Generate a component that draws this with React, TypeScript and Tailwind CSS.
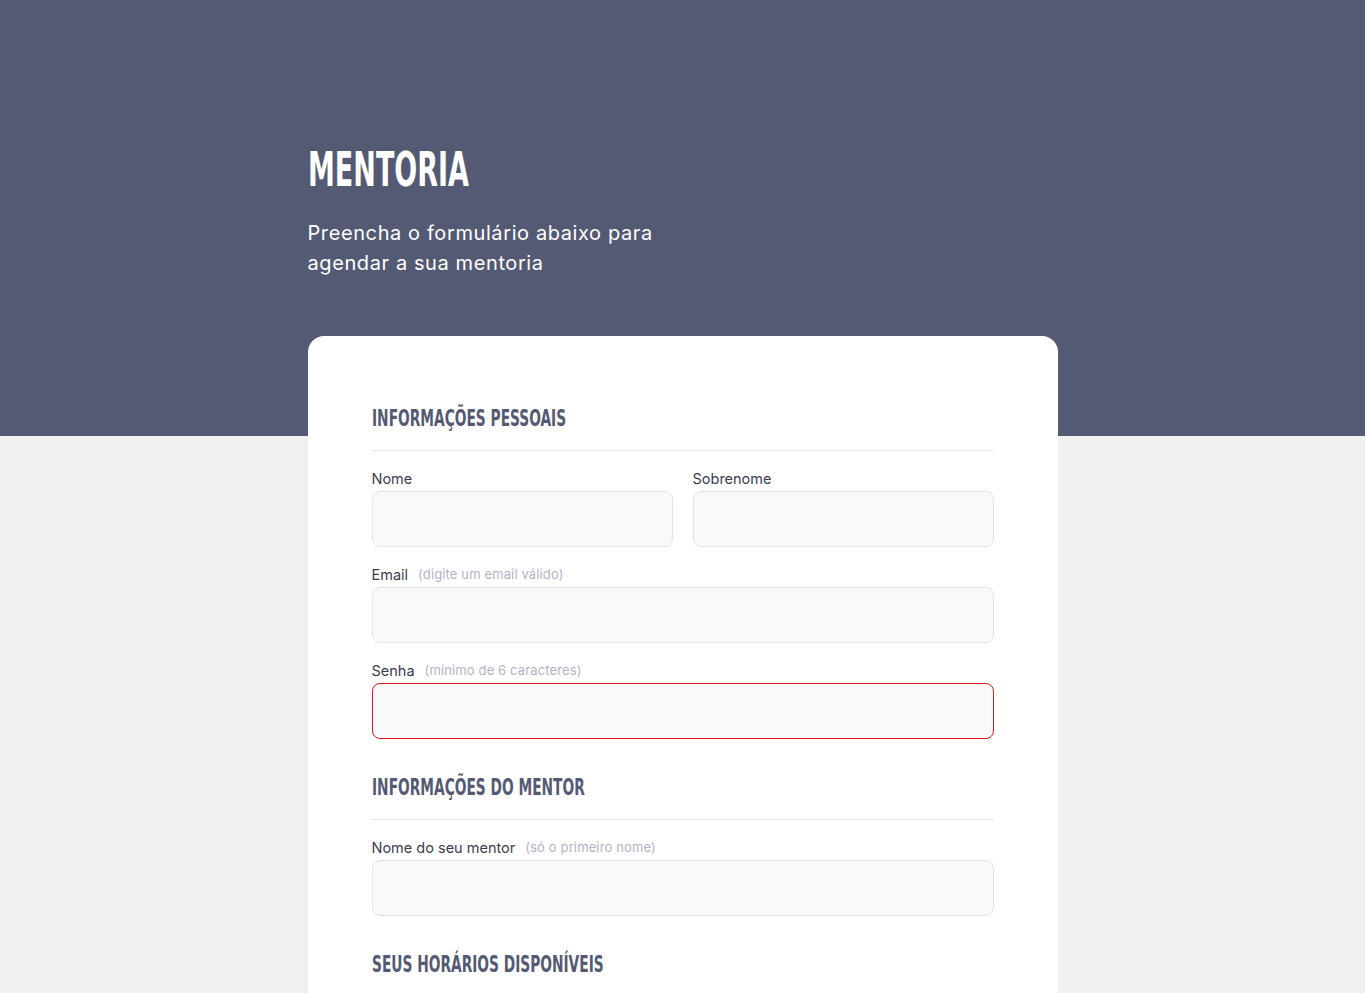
import React from "react";

const display = "font-['Liberation_Sans_Narrow','DejaVu_Sans_Condensed','Liberation_Sans',sans-serif] font-bold uppercase";
const body = "font-['Inter','Noto_Sans',sans-serif]";

function SectionTitle({ children, first }: { children: React.ReactNode; first?: boolean }) {
  return (
    <div className={`${first ? "" : "mt-8"} border-b border-[#e6e5ee] pb-4`}>
      <h2 className={`${display} h-8 text-[23px] leading-8 text-[#545a73] whitespace-nowrap`}>
        <span className="inline-block origin-left scale-x-[0.665]">{children}</span>
      </h2>
    </div>
  );
}

function Field({
  label,
  hint,
  error,
  className = "",
}: {
  label: string;
  hint?: string;
  error?: boolean;
  className?: string;
}) {
  return (
    <label className={`mt-4 flex flex-col ${className}`}>
      <span className="flex h-6 items-center gap-[10px]">
        <span className="text-[14.5px] text-[#3c3c4f]">{label}</span>
        {hint && <span className="text-[13px] tracking-[0.01em] text-[#b4b3c6]">({hint})</span>}
      </span>
      <input
        className={`h-14 w-full rounded-lg border bg-[#f9f9fb] px-4 text-[15px] outline-none ${
          error ? "border-[#e5161b]" : "border-[#e4e3ec]"
        }`}
      />
    </label>
  );
}

export default function App() {
  return (
    <div className={`${body} min-h-screen bg-[#f0f0f0]`}>
      <header className="h-[436px] bg-[#545a73]">
        <div className="mx-auto w-[750px] pt-[145px]">
          <h1 className={`${display} h-[48px] text-[48px] leading-[48px] text-white whitespace-nowrap`}>
            <span className="inline-block origin-left scale-x-[0.625]">Mentoria</span>
          </h1>
          <p className="mt-[25px] w-[380px] text-[20px] leading-[30px] tracking-[0.03em] text-white">
            Preencha o formulário abaixo para agendar a sua mentoria
          </p>
        </div>
      </header>

      <main className="mx-auto -mt-[100px] h-[720px] w-[750px] rounded-2xl bg-white px-16 pt-[66px] pb-16">
        <SectionTitle first>Informações pessoais</SectionTitle>
        <div className="grid grid-cols-2 gap-x-5">
          <Field label="Nome" />
          <Field label="Sobrenome" />
        </div>
        <Field label="Email" hint="digite um email válido" />
        <Field label="Senha" hint="mínimo de 6 caracteres" error />

        <SectionTitle>Informações do mentor</SectionTitle>
        <Field label="Nome do seu mentor" hint="só o primeiro nome" />

        <SectionTitle>Seus horários disponíveis</SectionTitle>
      </main>
    </div>
  );
}
